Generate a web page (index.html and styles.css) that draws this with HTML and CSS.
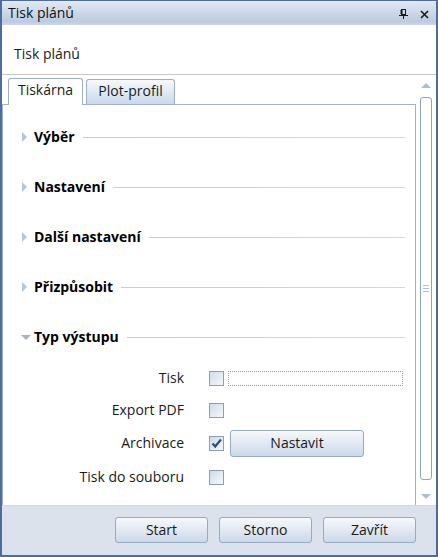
FILE: index.html
```html
<!DOCTYPE html>
<html lang="cs">
<head>
<meta charset="utf-8">
<title>Tisk plánů</title>
<link rel="stylesheet" href="styles.css">
</head>
<body>
<div class="window">
  <div class="titlebar">
    <span class="title">Tisk plánů</span>
    <div class="tools">
      <svg class="icon" width="9" height="10" viewBox="0 0 9 10"><rect x="2.5" y="0.5" width="4" height="5" fill="none" stroke="#1a1a1a"/><line x1="2.5" y1="1" x2="2.5" y2="5" stroke="#1a1a1a" stroke-width="2"/><line x1="0" y1="6.5" x2="9" y2="6.5" stroke="#1a1a1a"/><line x1="4.5" y1="7" x2="4.5" y2="10" stroke="#1a1a1a"/></svg>
      <svg class="icon" width="9" height="9" viewBox="0 0 9 9"><path d="M1 1 L8 8 M8 1 L1 8" stroke="#1a1a1a" stroke-width="1.6"/></svg>
    </div>
  </div>
  <div class="header">Tisk plánů</div>
  <div class="body">
    <div class="main">
      <div class="tabs">
        <div class="tab active">Tiskárna</div>
        <div class="tab">Plot-profil</div>
      </div>
      <div class="panel">
        <div class="section"><span class="arrow"><span class="tri-right"></span></span><span class="stitle">Výběr</span><span class="rule"></span></div>
        <div class="section"><span class="arrow"><span class="tri-right"></span></span><span class="stitle">Nastavení</span><span class="rule"></span></div>
        <div class="section"><span class="arrow"><span class="tri-right"></span></span><span class="stitle">Další nastavení</span><span class="rule"></span></div>
        <div class="section"><span class="arrow"><span class="tri-right"></span></span><span class="stitle">Přizpůsobit</span><span class="rule"></span></div>
        <div class="section"><span class="arrow"><span class="tri-down"></span></span><span class="stitle">Typ výstupu</span><span class="rule"></span></div>
        <div class="form">
          <span class="lbl">Tisk</span><span class="cb"></span><span class="dotted"></span>
          <span class="lbl">Export PDF</span><span class="cb"></span><span></span>
          <span class="lbl">Archivace</span><span class="cb checked"><svg width="13" height="13" viewBox="0 0 13 13"><path d="M2.5 6.5 L5.2 9.5 L11 2.5" fill="none" stroke="#2c4c84" stroke-width="2.2"/></svg></span><button class="btn nastavit">Nastavit</button>
          <span class="lbl">Tisk do souboru</span><span class="cb"></span><span></span>
        </div>
      </div>
    </div>
    <div class="scrollbar">
      <span class="sarrow up"></span>
      <div class="thumb"><span class="grip"></span><span class="grip"></span><span class="grip"></span></div>
      <span class="sarrow down"></span>
    </div>
  </div>
  <div class="footer">
    <button class="btn fbtn">Start</button>
    <button class="btn fbtn">Storno</button>
    <button class="btn fbtn">Zavřít</button>
  </div>
</div>
</body>
</html>
```
FILE: styles.css
```css
* { box-sizing: border-box; }
html, body { margin: 0; padding: 0; background: #fff; }
body { font-family: "Open Sans", "Noto Sans", sans-serif; font-size: 14px; color: #1a1a1a; }

.window {
  width: 438px;
  height: 557px;
  border: 2px solid #4f6d9a;
  border-top-width: 1px;
  display: flex;
  flex-direction: column;
  background: #fff;
  overflow: hidden;
}

.titlebar {
  height: 24px;
  flex: none;
  display: flex;
  align-items: center;
  justify-content: space-between;
  padding: 0 7px 0 6px;
  background: linear-gradient(#e2e9f3, #bccbe0 85%, #cdd8e7);
}
.title { line-height: 20px; color: #111; }
.tools { display: flex; align-items: center; gap: 12px; padding-top: 2px; }
.icon { display: block; }

.header {
  height: 50px;
  flex: none;
  padding: 19px 0 0 12px;
  line-height: 20px;
  border-bottom: 1px solid #c8c8c8;
}

.body {
  flex: 1;
  display: flex;
  min-height: 0;
}
.main {
  width: 414px;
  display: flex;
  flex-direction: column;
}
.tabs {
  height: 29px;
  flex: none;
  display: flex;
  align-items: flex-end;
  gap: 3px;
  padding-left: 6px;
  position: relative;
  z-index: 1;
}
.tab {
  height: 25px;
  border: 1px solid #9cadc5;
  border-bottom: none;
  border-radius: 3px 3px 0 0;
  background: linear-gradient(#f7f9fc, #c9d8ec);
  line-height: 22px;
  text-align: center;
  width: 89px;
}
.tab.active {
  width: 75px;
  height: 27px;
  margin-bottom: -1px;
  background: #fff;
}

.panel {
  flex: 1;
  border: 1px solid #a3b2c8;
  border-bottom: none;
  padding-top: 7px;
  background: #fff;
}
.section {
  height: 50px;
  display: flex;
  align-items: center;
  padding: 0 10px 0 18px;
}
.arrow {
  width: 13px;
  height: 10px;
  flex: none;
  position: relative;
}
.tri-right {
  position: absolute;
  left: 1px;
  top: 0;
  width: 0;
  height: 0;
  border-top: 5px solid transparent;
  border-bottom: 5px solid transparent;
  border-left: 5px solid #b4c5dc;
}
.tri-down {
  position: absolute;
  left: 0;
  top: 3px;
  width: 0;
  height: 0;
  border-left: 5px solid transparent;
  border-right: 5px solid transparent;
  border-top: 5px solid #a8b3c2;
}
.stitle { font-weight: 700; color: #000; line-height: 20px; }
.rule {
  flex: 1;
  height: 1px;
  margin-left: 8px;
  background: linear-gradient(90deg, #bcd0ea, #c9d9ee);
}

.form {
  display: grid;
  grid-template-columns: 206px 15px 1fr;
  grid-template-rows: 32px 32px 34px 34px;
  align-items: center;
}
.lbl { text-align: right; line-height: 20px; padding-right: 25px; }
.cb {
  width: 15px;
  height: 15px;
  border: 1px solid #8e9eb6;
  background: linear-gradient(135deg, #cfdbea, #f5f8fb);
  display: flex;
  align-items: center;
  justify-content: center;
}
.dotted {
  margin-left: 4px;
  width: 175px;
  height: 15px;
  border: 1px dotted #9a9a9a;
}

.btn {
  font-family: inherit;
  font-size: 14px;
  color: #1a1a1a;
  border: 1px solid #98a9c1;
  border-radius: 3px;
  background: linear-gradient(#f6f8fb, #e2e9f3 50%, #cad8eb);
  padding: 0;
  line-height: 20px;
}
.nastavit { margin-left: 6px; width: 134px; height: 27px; }

.scrollbar {
  width: 20px;
  flex: none;
  display: flex;
  flex-direction: column;
  align-items: center;
  padding-top: 8px;
  background: #fff;
}
.sarrow { width: 0; height: 0; border-left: 5px solid transparent; border-right: 5px solid transparent; }
.sarrow.up { border-bottom: 5px solid #a9bfdb; }
.sarrow.down { border-top: 5px solid #a9bfdb; margin-top: 14px; }
.thumb {
  margin-top: 9px;
  width: 12px;
  height: 383px;
  border: 1px solid #8fa3c1;
  border-radius: 3px;
  background: #fff;
  display: flex;
  flex-direction: column;
  align-items: center;
  justify-content: center;
  gap: 2px;
}
.grip { width: 6px; height: 1px; background: #a9bfdb; }

.footer {
  height: 50px;
  flex: none;
  background: #dbe2ec;
  border-top: 1px solid #cfd7e2;
  display: flex;
  justify-content: flex-end;
  gap: 11px;
  padding: 11px 20px 0 0;
}
.fbtn { width: 93px; height: 26px; }
```
